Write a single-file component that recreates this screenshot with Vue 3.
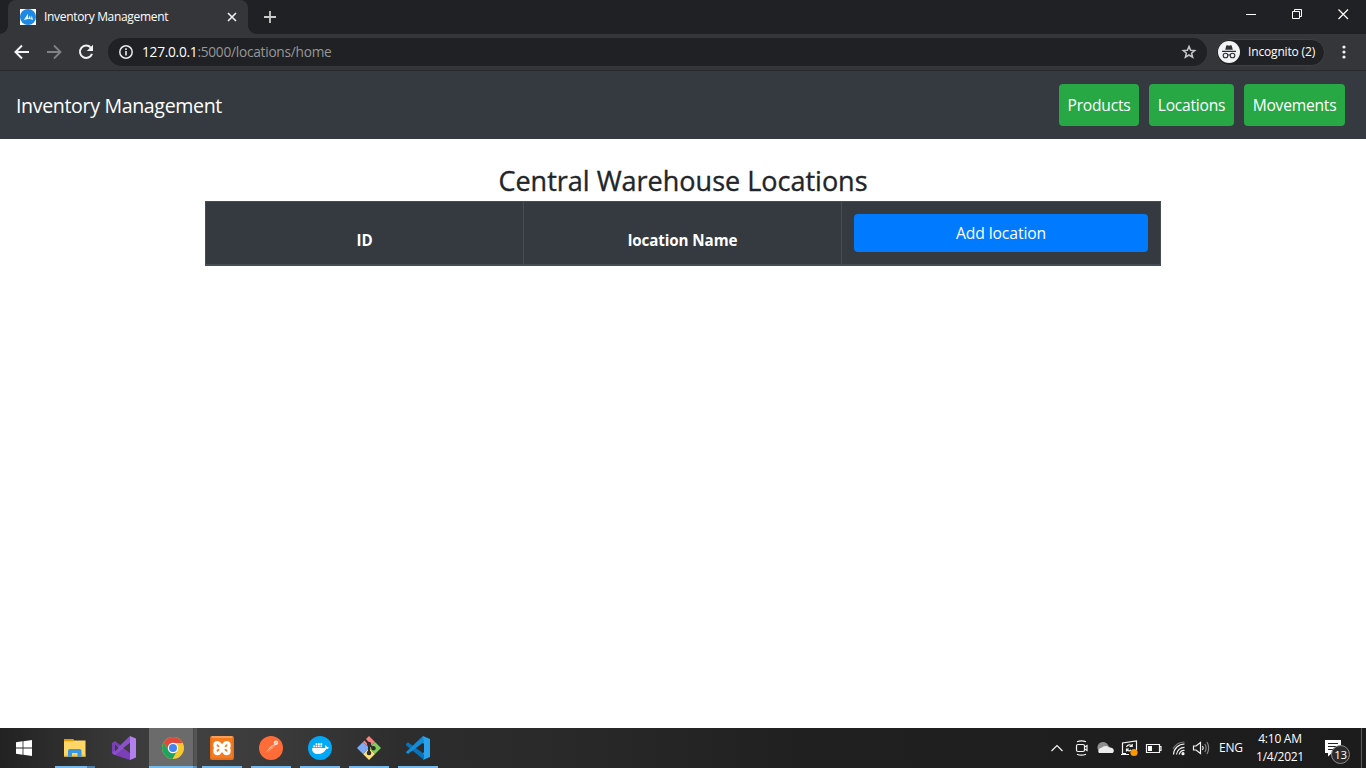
<script setup>
const navLinks = [
  { label: 'Products', cls: 'products' },
  { label: 'Locations', cls: 'locations' },
  { label: 'Movements', cls: 'movements' },
]
</script>

<template>
  <div class="screen">
    <div class="tabstrip">
      <div class="tab">
        <svg class="favicon" width="16" height="16" viewBox="0 0 16 16">
          <rect width="16" height="16" fill="#fff" />
          <circle cx="8" cy="8" r="8" fill="#1e88e5" />
          <path d="M3.5 11.5 8 4.5V10L9.8 6.5 10.8 10 11.8 6.5 13 11C10 9.5 7 10 3.5 11.5Z" fill="#e3f2fd" />
        </svg>
        <span class="tab-title">Inventory Management</span>
        <svg class="tab-close" width="10" height="10" viewBox="0 0 10 10"><path d="M1 1 9 9M9 1 1 9" stroke="#f1f1f1" stroke-width="1.6" /></svg>
      </div>
      <svg class="new-tab" width="12" height="12" viewBox="0 0 12 12"><path d="M6 0V12M0 6H12" stroke="#ccc" stroke-width="1.8" /></svg>
      <div class="window-controls">
        <svg width="11" height="11" viewBox="0 0 11 11"><path d="M0 5.5H10" stroke="#fff" /></svg>
        <svg width="11" height="11" viewBox="0 0 11 11" fill="none" stroke="#fff"><path d="M.5 2.5H7.5V9.5H.5ZM2.5 2.5V.5H9.5V7.5H7.5" /></svg>
        <svg width="11" height="11" viewBox="0 0 11 11"><path d="M.5 .5 10 10M10 .5 .5 10" stroke="#fff" stroke-width="1.2" /></svg>
      </div>
    </div>

    <div class="toolbar">
      <div class="nav-icons">
        <svg width="16" height="16" viewBox="0 0 16 16" fill="none" stroke="#f1f3f4" stroke-width="2"><path d="M15 8H2M8 1.5 1.5 8 8 14.5" /></svg>
        <svg width="16" height="16" viewBox="0 0 16 16" fill="none" stroke="#818284" stroke-width="1.8"><path d="M1 8H14M8 1.5 14.5 8 8 14.5" /></svg>
        <svg width="16" height="16" viewBox="0 0 16 16"><path d="M12.8 3.6A6.2 6.2 0 1 0 14 9.8" fill="none" stroke="#f1f3f4" stroke-width="2" /><path d="M15 .8V7H8.8Z" fill="#f1f3f4" /></svg>
      </div>
      <div class="omnibox">
        <svg width="14" height="14" viewBox="0 0 14 14"><circle cx="7" cy="7" r="6.2" fill="none" stroke="#e8eaed" stroke-width="1.5" /><path d="M7 6V10.5M7 3.3V4.9" stroke="#e8eaed" stroke-width="1.6" /></svg>
        <span class="url"><span class="host">127.0.0.1</span><span class="path">:5000/locations/home</span></span>
        <svg class="star" width="16" height="16" viewBox="0 0 16 16"><path d="M8 2.4 9.6 6.2 13.7 6.5 10.6 9.2 11.6 13.2 8 11 4.4 13.2 5.4 9.2 2.3 6.5 6.4 6.2Z" fill="none" stroke="#c4c7ca" stroke-width="1.5" /></svg>
      </div>
      <div class="incognito">
        <svg width="22" height="22" viewBox="0 0 22 22">
          <circle cx="11" cy="11" r="11" fill="#f1f3f4" />
          <path d="M7.2 8.8 8.3 4.6 9.4 4.3 11 4.8 12.6 4.3 13.7 4.6 14.8 8.8Z" fill="#303134" />
          <path d="M4 10.4H18M9.6 14.2Q11 13.2 12.4 14.2" fill="none" stroke="#303134" stroke-width="1.1" />
          <circle cx="7.5" cy="14.5" r="2.3" fill="none" stroke="#303134" stroke-width="1.1" />
          <circle cx="14.5" cy="14.5" r="2.3" fill="none" stroke="#303134" stroke-width="1.1" />
        </svg>
        <span class="incognito-label">Incognito (2)</span>
      </div>
      <svg class="kebab" width="4" height="14" viewBox="0 0 4 14" fill="#f1f3f4"><circle cx="2" cy="2" r="1.6" /><circle cx="2" cy="7" r="1.6" /><circle cx="2" cy="12" r="1.6" /></svg>
    </div>

    <header class="navbar">
      <span class="brand">Inventory Management</span>
      <nav class="links">
        <a v-for="link in navLinks" :key="link.label" class="nav-btn" :class="link.cls">{{ link.label }}</a>
      </nav>
    </header>

    <main class="content">
      <h3 class="title">Central Warehouse Locations</h3>
      <div class="table-head">
        <div class="th">ID</div>
        <div class="th">location Name</div>
        <div class="th action"><button class="add">Add location</button></div>
      </div>
    </main>

    <footer class="taskbar">
      <div class="apps">
        <div class="app start">
          <svg width="16" height="16" viewBox="0 0 16 16" fill="#fff"><path d="M0 2.2 6.6 1.3V7.5H0ZM7.4 1.2 16 0V7.5H7.4ZM0 8.4H6.6V14.7L0 13.8ZM7.4 8.4H16V16L7.4 14.8Z" /></svg>
        </div>
        <div class="app open multi">
          <svg width="24" height="24" viewBox="0 0 24 24">
            <path d="M1 3H10L11 4.5H22.5V20.5H1Z" fill="#ffd766" /><path d="M1 3H10L11 5.3H1Z" fill="#e39b00" />
            <path d="M1 18.5H22.5V20.5H1Z" fill="#f9c846" />
            <path d="M5 20.8V14.8Q5 13 7 13H16.5Q18.5 13 18.5 14.8V20.8H14.5V17H9V20.8Z" fill="#3a96dd" />
          </svg>
        </div>
        <div class="app">
          <svg width="24" height="24" viewBox="0 0 24 24">
            <path d="M0 7 3 5 18 17V24L1.2 18.6 0 17Z" fill="#7b3fb8" />
            <path d="M0 17 18 0V7L3 19Z" fill="#8b50ca" /><path d="M18 0 24 2.5V21.5L18 24Z" fill="#b180ed" />
            <path d="M18 7V17L11.5 12Z" fill="#3d3d3d" /><path d="M3 8.5V15.5L6.5 12Z" fill="#3d3d3d" />
          </svg>
        </div>
        <div class="app open active">
          <svg width="24" height="24" viewBox="0 0 24 24">
            <circle cx="12" cy="12" r="11" fill="#f7c92f" />
            <path d="M2.5 6.5A11 11 0 0 1 21.5 6.5L21.8 7H12A5 5 0 0 0 7.7 14.5Z" fill="#de4b3d" />
            <path d="M2.5 6.5A11 11 0 0 0 11.5 23L16.3 14.5A5 5 0 0 1 7.7 14.5L2.5 6.5Z" fill="#1da462" />
            <circle cx="12" cy="12" r="5.2" fill="#fff" /><circle cx="12" cy="12" r="4" fill="#4285f4" />
          </svg>
        </div>
        <div class="app open">
          <svg width="24" height="24" viewBox="0 0 24 24">
            <rect width="24" height="24" rx="2" fill="#e96d17" /><rect x="1.5" y="2" width="21" height="20" fill="#f47b20" /><rect x="1.5" y="0" width="21" height="2" fill="#fa9e58" />
            <path d="M7.5 6.7C10.5 6.7 9.5 9.8 12 9.8S13.5 6.7 16.5 6.7C20 6.7 19.5 11 17.5 12C19.5 13 20 17.5 16.5 17.5C13.5 17.5 14.5 14.4 12 14.4S10.5 17.5 7.5 17.5C4 17.5 4.5 13 6.5 12C4.5 11 4 6.7 7.5 6.7Z" fill="none" stroke="#fff" stroke-width="3.3" />
            <path d="M9 12H15" stroke="#fff" stroke-width="3" />
          </svg>
        </div>
        <div class="app open">
          <svg width="24" height="24" viewBox="0 0 24 24">
            <circle cx="12" cy="12" r="12" fill="#ff6c37" />
            <path d="M5.5 18.5 11 11 15.8 7.8 16.8 8.8 12.5 13Z" fill="#ffd2bf" /><path d="M6 18 15.5 9" stroke="#f4571f" stroke-width=".8" />
            <circle cx="17" cy="6.7" r="2.2" fill="#ffe5da" /><path d="M16 7.7 18 5.7" stroke="#ff6c37" stroke-width=".7" />
          </svg>
        </div>
        <div class="app open">
          <svg width="24" height="24" viewBox="0 0 24 24">
            <circle cx="12" cy="12" r="12" fill="#00a8f5" />
            <path d="M4 12H17.3Q16.5 10.5 17.5 9Q18.8 9.8 18.9 11Q20.2 10.8 21 11.5Q20.2 13 18.2 13Q15.8 18 9.7 18Q4 18 4 12Z" fill="#fff" />
            <path d="M5.2 9.5H7V11.2H5.2ZM7.6 9.5H9.4V11.2H7.6ZM10 9.5H11.8V11.2H10ZM12.4 9.5H14.2V11.2H12.4ZM7.6 7.3H9.4V9H7.6ZM10 7.3H11.8V9H10ZM12.4 7.3H14.2V9H12.4Z" fill="#fff" />
          </svg>
        </div>
        <div class="app open">
          <svg width="24" height="24" viewBox="0 0 24 24">
            <path d="M12 0 18 6 12 12 6 6Z" fill="#ff8080" /><path d="M18 6 24 12 18 18 12 12Z" fill="#80cf5b" />
            <path d="M12 12 18 18 12 24 6 18Z" fill="#ffe078" /><path d="M6 6 12 12 6 18 0 12Z" fill="#7eaaf5" />
            <path d="M8 3.5 12 8V18M12 8.5 17 13" fill="none" stroke="#302d2d" stroke-width="2" />
            <g fill="#302d2d"><circle cx="12" cy="8" r="2.2" /><circle cx="12" cy="17" r="2.3" /><circle cx="16.5" cy="12.3" r="2.2" /></g>
          </svg>
        </div>
        <div class="app open">
          <svg width="24" height="24" viewBox="0 0 24 24">
            <path d="M17 0 24 3V21L17 24Z" fill="#29a3ed" /><path d="M0 8 2 6.3 18 18V24L0 9.3Z" fill="#0873bd" />
            <path d="M0 16 17 0 18 6 2 18 0 16.5Z" fill="#168bd4" /><path d="M18 7V17L11.2 12Z" fill="#2d2d2d" />
          </svg>
        </div>
      </div>

      <div class="tray">
        <svg width="168" height="24" viewBox="0 0 168 24" fill="none" stroke="#f4f4f4" stroke-width="1.2">
          <path d="M5.5 15 11 9.5 16.5 15" />
          <rect x="30.5" y="8.5" width="8" height="7" rx="1.5" /><path d="M38.5 11 41 9.5V14.5L38.5 13M31 5.8Q35.5 3.8 40 5.8M31 18.2Q35.5 20.2 40 18.2" />
          <g stroke="none"><path d="M52 14A5 5 0 0 1 62 9L66 14Z" fill="#8f8f8f" /><path d="M53 17A3 3 0 0 1 55 12Q59.5 8.5 63 11.5Q67 11 67.8 14.2Q68 17 65.5 17Z" fill="#ececec" /></g>
          <path d="M80 17.5H76.5V7L90.5 5V14M75 18.5H83M86.2 8V10.5H83.5M86 10.5A3 3 0 0 0 80.5 11M80.5 15.5V13H83M80.8 13.5A3 3 0 0 0 85 14" />
          <circle cx="88" cy="16.5" r="3.6" fill="#ff9800" stroke="none" />
          <path d="M100.5 8.5H113.5V16.5H100.5ZM114 10.5H115V14.5H114" /><rect x="102" y="10" width="4" height="5" fill="#fff" stroke="none" />
          <path d="M127.5 18.5A11 11 0 0 1 138.5 8M130.5 18.5A8 8 0 0 1 138.5 11.3M133.3 18.5A5 5 0 0 1 138.5 14.3" /><path d="M127 13A13 13 0 0 1 138.5 6" stroke="#777" /><circle cx="137" cy="17.7" r="1" fill="#fff" />
          <path d="M147.5 10H150L154.5 6.5V17.5L150 14H147.5ZM156.5 10Q158 12 156.5 14" /><path d="M158.8 8Q161.4 12 158.8 16M161 6Q164.3 12 161 18" stroke="#888" />
        </svg>
        <span class="lang">ENG</span>
        <div class="clock"><span class="time">4:10 AM</span><span class="date">1/4/2021</span></div>
        <div class="notify">
          <svg width="18" height="18" viewBox="0 0 18 18"><path d="M0 0H16V13H7L3 16.5V13H0Z" fill="#fff" /><path d="M3 3.5H13M3 6.5H13M3 9.5H9" stroke="#222" /></svg>
          <span class="badge">13</span>
        </div>
        <div class="desktop-edge"></div>
      </div>
    </footer>
  </div>
</template>

<style>
html, body { margin: 0; overflow: hidden; }
</style>

<style scoped>
* { box-sizing: border-box; }
svg { display: block; flex: none; }
.screen { width: 1366px; height: 768px; display: flex; flex-direction: column; background: #fff; font-family: "Open Sans", "Noto Sans", sans-serif; white-space: nowrap; overflow: hidden; }
.tabstrip { height: 34px; background: #202124; display: flex; flex: none; padding-left: 8px; align-items: flex-start; }
.tab { width: 240px; height: 34px; background: #35363a; border-radius: 8px 8px 0 0; display: flex; align-items: center; padding: 0 11px 0 12px; position: relative; }
.tab::before, .tab::after { content: ""; position: absolute; bottom: 0; width: 8px; height: 8px; }
.tab::before { left: -8px; background: radial-gradient(circle at 0 0, transparent 7.5px, #35363a 8px); }
.tab::after { right: -8px; background: radial-gradient(circle at 100% 0, transparent 7.5px, #35363a 8px); }
.tab-title { font-size: 12px; color: #fff; margin-left: 8px; flex: 1; letter-spacing: -0.32px; padding-bottom: 1px; }
.new-tab { margin: 11px 0 0 16px; }
.window-controls { margin: 9px 17px 0 auto; display: flex; gap: 35px; }
.toolbar { height: 37px; flex: none; background: #35363a; border-bottom: 1px solid #28292b; display: flex; align-items: center; padding: 0 20px 0 14px; }
.nav-icons { display: flex; gap: 16px; width: 94px; }
.omnibox { width: 1099px; height: 28px; border-radius: 14px; background: #202124; display: flex; align-items: center; padding: 0 10px 0 11px; }
.url { font-size: 13.7px; letter-spacing: -0.26px; margin-left: 9px; flex: 1; padding-bottom: 1px; }
.host { color: #fff; }
.path { color: #969798; }
.incognito { width: 109px; height: 27px; margin-left: 9px; border-radius: 14px; background: #202124; border: 1px solid #3f4043; display: flex; align-items: center; gap: 8px; padding-left: 1px; color: #fff; font-size: 12px; letter-spacing: -0.16px; }
.incognito-label { padding-bottom: 1px; }
.kebab { margin-left: auto; }
.navbar { height: 68px; flex: none; background: #343a40; display: flex; align-items: center; justify-content: space-between; padding: 0 21px 0 16px; }
.brand { font-size: 19.6px; letter-spacing: -0.36px; color: #fff; }
.links { display: flex; gap: 10px; }
.nav-btn { height: 42px; border-radius: 4px; background: #28a745; color: #fff; font-size: 15.6px; letter-spacing: -0.22px; line-height: 42px; text-align: center; }
.products { width: 80px; }
.locations { width: 85px; }
.movements { width: 101px; }
.content { flex: 1; padding: 24px 205px 0; }
.title { height: 38px; margin: 0; font-size: 27px; font-weight: 500; line-height: 36px; color: #212529; text-align: center; -webkit-text-stroke: 0.35px #212529; }
.table-head { height: 65px; border: 1px solid #454d55; border-bottom-width: 2px; background: #343a40; display: grid; grid-template-columns: 318px 318px 1fr; }
.th { font-size: 15.2px; letter-spacing: -0.1px; font-weight: 700; color: #fff; text-align: center; padding-top: 27px; line-height: 22px; border-right: 1px solid #454d55; }
.th.action { padding: 12px 12px 0; border-right: 0; }
.add { display: block; width: 294px; height: 38px; border: 0; border-radius: 4px; background: #007bff; color: #fff; font: 400 15.7px/38px "Open Sans", "Noto Sans", sans-serif; letter-spacing: -0.1px; padding: 0; }
.taskbar { height: 40px; flex: none; background: linear-gradient(90deg, #222 0, #353535 100px, #414141 180px, #3b3b3b 270px, #2d2d2d 400px, #292929 560px, #202020 800px, #1c1c1c 1366px); display: flex; justify-content: space-between; }
.apps { display: flex; gap: 1px; }
.app { width: 48px; height: 40px; display: flex; align-items: center; justify-content: center; position: relative; }
.start { margin-right: 2px; }
.open::after { content: ""; position: absolute; left: 4px; bottom: 0; width: 40px; height: 2px; background: #76b9ed; }
.multi::after { background: linear-gradient(90deg, #76b9ed 32px, #4e7fa5 32px); }
.active { background: linear-gradient(90deg, #6b6b6b 44px, #4a4a4a 44px, #4a4a4a 45px, #555 45px); }
.active::after { left: 0; width: 48px; background: linear-gradient(90deg, #76b9ed 44px, #5c91bb 44px); }
.tray { display: flex; align-items: center; color: #fff; font-size: 12px; letter-spacing: -0.25px; }
.lang { margin-left: 5px; width: 32px; padding-bottom: 1px; }
.clock { display: flex; flex-direction: column; width: 58px; text-align: center; line-height: 18px; padding-bottom: 1px; }
.notify { width: 34px; height: 40px; margin-left: 8px; padding: 12px 0 0 8px; position: relative; }
.badge { position: absolute; left: 14px; top: 17px; width: 19px; height: 19px; border: 1px solid #8b8b8b; border-radius: 50%; background: #2b2b2b; font-size: 11.5px; line-height: 17px; text-align: center; }
.desktop-edge { width: 5px; height: 40px; border-left: 1px solid #5c5c5c; margin-left: 10px; }
</style>
